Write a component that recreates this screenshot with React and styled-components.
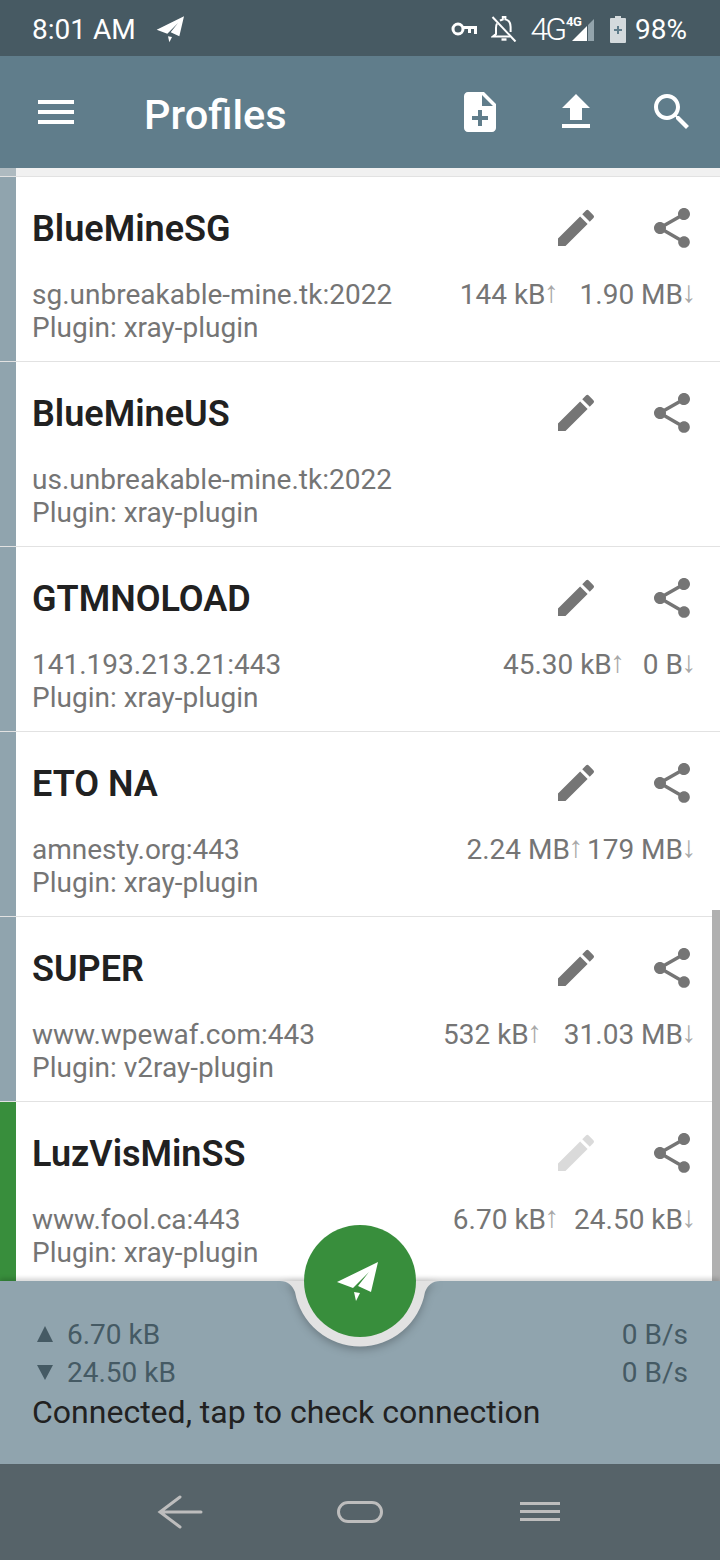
import styled, { createGlobalStyle } from "styled-components"

const GlobalStyle = createGlobalStyle`
  html, body {
    margin: 0;
    padding: 0;
    background: #fff;
    font-family: Roboto, "Liberation Sans", sans-serif;
  }
`

const profiles = [
  { name: "BlueMineSG", host: "sg.unbreakable-mine.tk:2022", plugin: "xray-plugin", tx: "144 kB", rx: "1.90 MB", tab: 22 },
  { name: "BlueMineUS", host: "us.unbreakable-mine.tk:2022", plugin: "xray-plugin" },
  { name: "GTMNOLOAD", host: "141.193.213.21:443", plugin: "xray-plugin", tx: "45.30 kB", rx: "0 B", tab: 19 },
  { name: "ETO NA", host: "amnesty.org:443", plugin: "xray-plugin", tx: "2.24 MB", rx: "179 MB", tab: 5 },
  { name: "SUPER", host: "www.wpewaf.com:443", plugin: "v2ray-plugin", tx: "532 kB", rx: "31.03 MB", tab: 23 },
  { name: "LuzVisMinSS", host: "www.fool.ca:443", plugin: "xray-plugin", tx: "6.70 kB", rx: "24.50 kB", tab: 16, active: true },
]

const Phone = styled.div`
  position: relative;
  width: 720px;
  height: 1560px;
  overflow: hidden;
  display: flex;
  flex-direction: column;
`

const StatusBar = styled.div`
  height: 56px;
  background: #475a63;
  color: #fff;
  display: flex;
  align-items: center;
  padding: 2px 33px 0 32px;
  box-sizing: border-box;
  font-size: 28px;
`

const StatusGroup = styled.div`
  display: flex;
  align-items: center;
  margin-left: ${(p) => (p.$right ? "auto" : "0")};
`

const Clock = styled.span`
  margin-right: 20px;
`

const StatusSlot = styled.span`
  display: flex;
  margin-left: ${(p) => p.$gap}px;
`

const NetLabel = styled.span`
  font-size: 32px;
  font-weight: 300;
  letter-spacing: -3px;
  margin-left: 13px;
`

const NetBadge = styled.span`
  position: relative;
  display: flex;
  margin-left: 3px;
`

const SmallLabel = styled.span`
  position: absolute;
  left: -1px;
  top: -3px;
  font-size: 13px;
  line-height: 14px;
  font-weight: 700;
  letter-spacing: -0.5px;
`

const Percent = styled.span`
  margin-left: 9px;
`

const Toolbar = styled.div`
  height: 112px;
  background: #607d8b;
  color: #fff;
  display: flex;
  align-items: center;
`

const ToolButton = styled.div`
  width: 96px;
  height: 112px;
  display: flex;
  align-items: center;
  justify-content: center;
  flex-shrink: 0;
  margin-left: ${(p) => (p.$first ? "8px" : "0")};
`

const Title = styled.div`
  flex: 1;
  margin-left: 40px;
  padding-top: 5px;
  font-size: 41.5px;
  font-weight: 500;
`

const List = styled.div`
  height: 1113px;
  background: #e2e2e2;
  overflow: hidden;
  display: flex;
  flex-direction: column;
`

const RowTail = styled.div`
  flex-shrink: 0;
  height: 8px;
  margin-bottom: 1px;
  background: #f1f1f1;
  border-left: 16px solid #aebac0;
`

const Row = styled.div`
  flex-shrink: 0;
  height: 184px;
  margin-bottom: 1px;
  background: #fff;
  border-left: 16px solid ${(p) => (p.$active ? "#388e3c" : "#90a4ae")};
  padding-left: 16px;
  box-sizing: border-box;
`

const RowTop = styled.div`
  height: 101px;
  display: flex;
  align-items: center;
`

const RowName = styled.div`
  flex: 1;
  padding-top: 2px;
  font-size: 36px;
  font-weight: 600;
  color: #212121;
`

const RowIcon = styled.div`
  width: 96px;
  height: 96px;
  display: flex;
  align-items: center;
  justify-content: center;
  flex-shrink: 0;
  color: #757575;
  opacity: ${(p) => (p.$disabled ? 0.26 : 1)};
`

const InfoLine = styled.div`
  height: 33px;
  display: flex;
  align-items: center;
  justify-content: space-between;
  padding-right: 25px;
  font-size: 28px;
  color: #757575;
`

const Traffic = styled.div`
  display: flex;
  align-items: center;
`

const Arrow = styled.span`
  margin: 0 -3px;
  font-size: 30px;
  line-height: 33px;
  font-family: "Liberation Mono", monospace;
  color: #a8a8a8;
`

const RxPart = styled.span`
  margin-left: ${(p) => p.$tab}px;
`

const Scrollbar = styled.div`
  position: absolute;
  right: 0;
  top: 910px;
  width: 8px;
  height: 371px;
  background: #b0b0b0;
`

const StatsBar = styled.div`
  position: relative;
  height: 183px;
  background: #90a4ae;
  padding: 34px 32px 0 37px;
  box-sizing: border-box;
  box-shadow: 0 -3px 4px rgba(0, 0, 0, 0.15);
`

const Notch = styled.svg`
  position: absolute;
  left: 276px;
  top: 0;
  width: 168px;
  height: 90px;
  overflow: visible;
  filter: drop-shadow(0 3px 4px rgba(0, 0, 0, 0.25));
`

const Fab = styled.div`
  position: absolute;
  left: 304px;
  top: -56px;
  width: 112px;
  height: 112px;
  border-radius: 50%;
  background: #388e3c;
  display: flex;
  align-items: center;
  justify-content: center;
`

const StatLine = styled.div`
  height: 38px;
  display: flex;
  align-items: center;
  justify-content: space-between;
  font-size: 28px;
  color: #455a64;
`

const StatValue = styled.span`
  display: flex;
  align-items: center;
  gap: 14px;
`

const ConnectionText = styled.div`
  margin: -1px 0 0 -5px;
  font-size: 32px;
  line-height: 44px;
  color: #212121;
`

const NavBar = styled.div`
  height: 96px;
  background: #566369;
  display: grid;
  grid-template-columns: repeat(3, 180px);
  justify-content: center;
  align-items: center;
  justify-items: center;
`

const Svg = ({ size = 48, children }) => (
  <svg width={size} height={size} viewBox="0 0 24 24" fill="currentColor">
    {children}
  </svg>
)

const MenuIcon = () => (
  <Svg><path d="M3 18h18v-2H3v2zm0-5h18v-2H3v2zm0-7v2h18V6H3z" /></Svg>
)
const NoteAddIcon = () => (
  <Svg><path d="M14 2H6c-1.1 0-1.99.9-1.99 2L4 20c0 1.1.89 2 1.99 2H18c1.1 0 2-.9 2-2V8l-6-6zm2 14h-3v3h-2v-3H8v-2h3v-3h2v3h3v2zm-3-7V3.5L18.5 9H13z" /></Svg>
)
const UploadIcon = () => (
  <Svg><path d="M9 16h6v-6h4l-7-7-7 7h4zm-4 2h14v2H5z" /></Svg>
)
const SearchIcon = () => (
  <Svg><path d="M15.5 14h-.79l-.28-.27C15.41 12.59 16 11.11 16 9.5 16 5.91 13.09 3 9.5 3S3 5.91 3 9.5 5.91 16 9.5 16c1.61 0 3.09-.59 4.23-1.57l.27.28v.79l5 4.99L20.49 19l-4.99-5zm-6 0C7.01 14 5 11.99 5 9.5S7.01 5 9.5 5 14 7.01 14 9.5 11.99 14 9.5 14z" /></Svg>
)
const EditIcon = () => (
  <Svg><path d="M3 17.25V21h3.75L17.81 9.94l-3.75-3.75L3 17.25zM20.71 7.04a.996.996 0 000-1.41l-2.34-2.34a.996.996 0 00-1.41 0l-1.83 1.83 3.75 3.75 1.83-1.83z" /></Svg>
)
const ShareIcon = () => (
  <Svg><path d="M18 16.08c-.76 0-1.44.3-1.96.77L8.91 12.7c.05-.23.09-.46.09-.7s-.04-.47-.09-.7l7.05-4.11c.54.5 1.25.81 2.04.81 1.66 0 3-1.34 3-3s-1.34-3-3-3-3 1.34-3 3c0 .24.04.47.09.7L8.04 9.81C7.5 9.31 6.79 9 6 9c-1.66 0-3 1.34-3 3s1.34 3 3 3c.79 0 1.5-.31 2.04-.81l7.12 4.16c-.05.21-.08.43-.08.65 0 1.61 1.31 2.92 2.92 2.92 1.61 0 2.92-1.31 2.92-2.92s-1.31-2.92-2.92-2.92z" /></Svg>
)

const PlaneIcon = ({ size = 48 }) => (
  <svg width={size} height={size} viewBox="0 0 48 48" fill="#fff">
    <polygon points="1,25 42,5 35,35 22,29 33,15 17,31" />
    <polygon points="18,35 24,36 20,44" />
  </svg>
)

const KeyIcon = () => (
  <svg width="26" height="14" viewBox="0 0 26 14" fill="none" stroke="#fff" strokeWidth="3">
    <circle cx="7" cy="7" r="5" />
    <path d="M12 5.5h12.5V12M18.5 6v5" />
  </svg>
)

const MutedBellIcon = () => (
  <svg width="26" height="26" viewBox="0 0 26 26" fill="none" stroke="#fff" strokeWidth="2">
    <path d="M6 7.5c-.7 1.2-1 2.6-1 4.5v6l-3 2.5h17" />
    <path d="M9 4.6c.9-.6 1.8-1 2.8-1.2V1h2.6v2.4c3.2.8 5.2 3.6 5.2 7.6v5" />
    <path d="M10.5 23.5h5" strokeWidth="2.4" />
    <path d="M1.5 1l23 24.5" />
  </svg>
)

const SignalIcon = () => (
  <svg width="27" height="23" viewBox="0 0 27 23">
    <polygon points="5,23 20,8 20,23" fill="#fff" />
    <polygon points="21,7 27,1 27,23 21,23" fill="#93a4ac" />
  </svg>
)

const BatteryIcon = () => (
  <svg width="16" height="27" viewBox="0 0 16 27">
    <path d="M5 0h6v2h4a1 1 0 011 1v23a1 1 0 01-1 1H1a1 1 0 01-1-1V3a1 1 0 011-1h4z" fill="#d4dadd" />
    <path d="M7 10h2v3h3v2H9v3H7v-3H4v-2h3z" fill="#607d8b" />
  </svg>
)

const BackIcon = () => (
  <svg width="46" height="34" viewBox="0 0 46 34" fill="none" stroke="#bdbdbd" strokeWidth="3" strokeLinecap="round">
    <path d="M3 17h41M23 2L3 17l20 15" />
  </svg>
)

const HomeIcon = () => (
  <svg width="46" height="22" viewBox="0 0 46 22" fill="none" stroke="#bdbdbd" strokeWidth="3">
    <rect x="1.5" y="1.5" width="43" height="19" rx="9.5" />
  </svg>
)

const RecentsIcon = () => (
  <svg width="40" height="20" viewBox="0 0 40 20" fill="#bdbdbd">
    <rect y="0" width="40" height="3" />
    <rect y="8" width="40" height="3" />
    <rect y="16" width="40" height="3" />
  </svg>
)

const TriangleIcon = ({ down }) => (
  <svg width="16" height="16" viewBox="0 0 16 16" fill="#455a64">
    <polygon points={down ? "0,1 16,1 8,16" : "0,16 16,16 8,0"} />
  </svg>
)

function ProfileRow({ profile }) {
  return (
    <Row $active={profile.active}>
      <RowTop>
        <RowName>{profile.name}</RowName>
        <RowIcon $disabled={profile.active}><EditIcon /></RowIcon>
        <RowIcon><ShareIcon /></RowIcon>
      </RowTop>
      <InfoLine>
        <span>{profile.host}</span>
        {profile.tx && (
          <Traffic>
            <span>{profile.tx}</span><Arrow>↑</Arrow>
            <RxPart $tab={profile.tab}>{profile.rx}</RxPart><Arrow>↓</Arrow>
          </Traffic>
        )}
      </InfoLine>
      <InfoLine>Plugin: {profile.plugin}</InfoLine>
    </Row>
  )
}

export default function App() {
  return (
    <>
      <GlobalStyle />
      <Phone>
        <StatusBar>
          <StatusGroup>
            <Clock>8:01 AM</Clock>
            <PlaneIcon size={32} />
          </StatusGroup>
          <StatusGroup $right>
            <KeyIcon />
            <StatusSlot $gap={14}><MutedBellIcon /></StatusSlot>
            <NetLabel>4G</NetLabel>
            <NetBadge>
              <SmallLabel>4G</SmallLabel>
              <SignalIcon />
            </NetBadge>
            <StatusSlot $gap={16}><BatteryIcon /></StatusSlot>
            <Percent>98%</Percent>
          </StatusGroup>
        </StatusBar>
        <Toolbar>
          <ToolButton $first><MenuIcon /></ToolButton>
          <Title>Profiles</Title>
          <ToolButton><NoteAddIcon /></ToolButton>
          <ToolButton><UploadIcon /></ToolButton>
          <ToolButton><SearchIcon /></ToolButton>
        </Toolbar>
        <List>
          <RowTail />
          {profiles.map((p) => <ProfileRow key={p.name} profile={p} />)}
        </List>
        <Scrollbar />
        <StatsBar>
          <Notch viewBox="0 0 168 90">
            <path d="M4 0C12 0 16 4 19 11A66 66 0 0 0 149 11C152 4 156 0 164 0Z" fill="#e2e2e2" />
          </Notch>
          <Fab><PlaneIcon /></Fab>
          <StatLine>
            <StatValue><TriangleIcon />6.70 kB</StatValue>
            <span>0 B/s</span>
          </StatLine>
          <StatLine>
            <StatValue><TriangleIcon down />24.50 kB</StatValue>
            <span>0 B/s</span>
          </StatLine>
          <ConnectionText>Connected, tap to check connection</ConnectionText>
        </StatsBar>
        <NavBar>
          <BackIcon />
          <HomeIcon />
          <RecentsIcon />
        </NavBar>
      </Phone>
    </>
  )
}
